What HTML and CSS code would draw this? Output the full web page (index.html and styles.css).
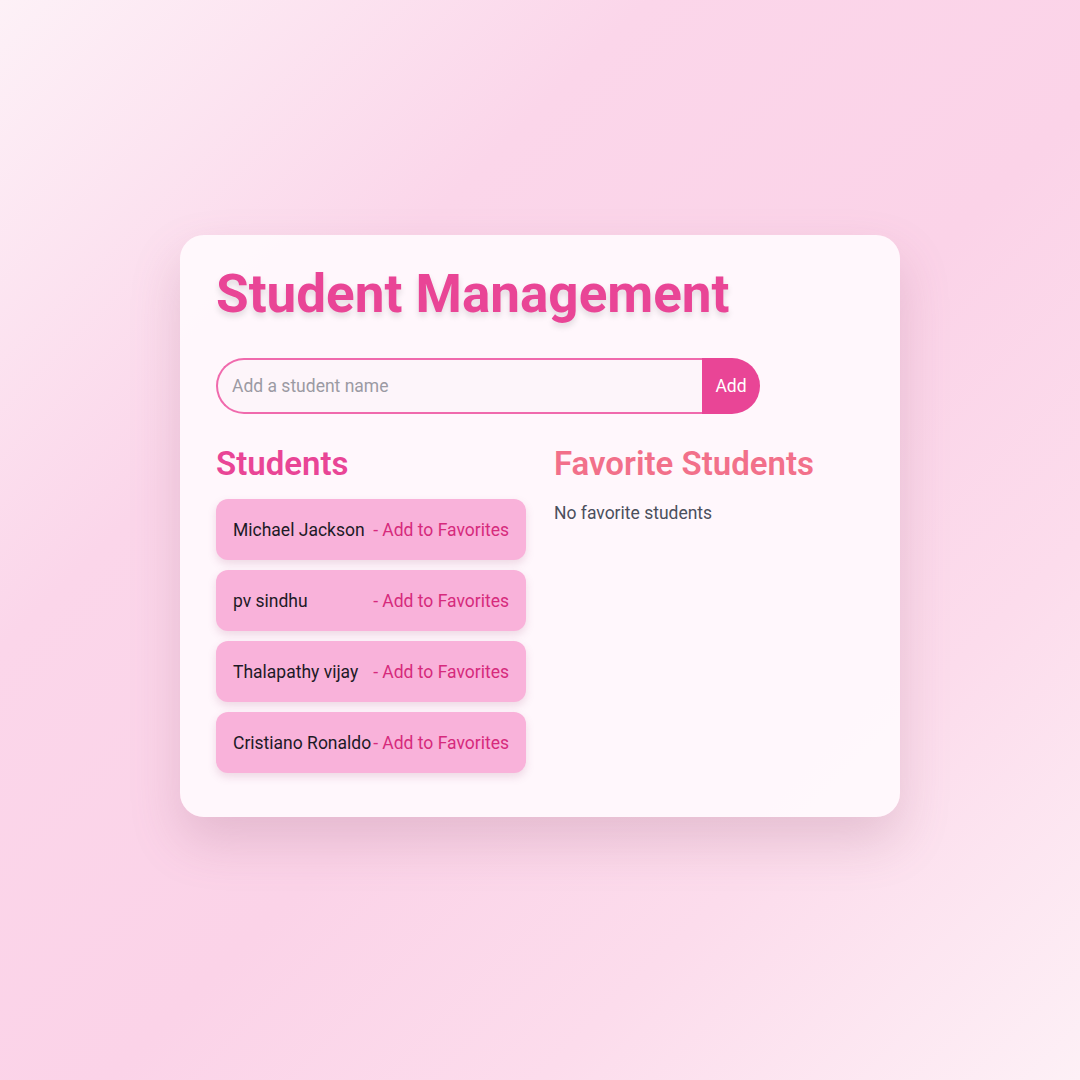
FILE: index.html
```html
<!DOCTYPE html>
<html lang="en">
<head>
  <meta charset="UTF-8" />
  <meta name="viewport" content="width=device-width, initial-scale=1.0"/>
  <title>Student Management</title>
  <link rel="stylesheet" href="styles.css">
</head>
<body>

  <main class="card">
    <h1 class="title">Student Management</h1>

    <!-- add student form -->
    <form class="add-form">
      <input type="text" class="add-input" placeholder="Add a student name" />
      <button type="submit" class="add-btn">Add</button>
    </form>

    <div class="columns">
      <section class="column">
        <h2 class="col-title">Students</h2>
        <ul class="student-list">
          <li class="student"><span class="name">Michael Jackson</span><a href="#" class="fav-link">- Add to Favorites</a></li>
          <li class="student"><span class="name">pv sindhu</span><a href="#" class="fav-link">- Add to Favorites</a></li>
          <li class="student"><span class="name">Thalapathy vijay</span><a href="#" class="fav-link">- Add to Favorites</a></li>
          <li class="student"><span class="name">Cristiano Ronaldo</span><a href="#" class="fav-link">- Add to Favorites</a></li>
        </ul>
      </section>

      <section class="column">
        <h2 class="col-title fav-title">Favorite Students</h2>
        <p class="empty">No favorite students</p>
      </section>
    </div>
  </main>

</body>
</html>
```

FILE: styles.css
```css
html, body {
  height: 100%;
}
body {
  margin: 0;
  box-sizing: border-box;
  padding-bottom: 28px;
  font-family: Roboto, "Noto Sans", sans-serif;
  background: linear-gradient(135deg, #fdf1f7 0%, #fbd6ea 30%, #fbd3e8 55%, #fcdcec 75%, #fdf0f6 100%);
  display: flex;
  justify-content: center;
  align-items: center;
}

.card {
  width: 720px;
  box-sizing: border-box;
  padding: 28px 36px 44px;
  background: rgba(255, 250, 253, 0.92);
  border-radius: 24px;
  box-shadow: 0 24px 50px rgba(150, 90, 120, 0.22);
}

.title {
  margin: 0 0 31px;
  font-size: 53px;
  font-weight: 700;
  color: #e94596;
  text-shadow: 0 4px 6px rgba(0, 0, 0, 0.12);
  line-height: 1.2;
}

.add-form {
  display: flex;
  width: 544px;
  margin-bottom: 30px;
}
.add-input {
  flex: 1;
  height: 56px;
  box-sizing: border-box;
  padding: 0 14px;
  font-family: inherit;
  font-size: 17.5px;
  color: #333;
  background: #fdf5fa;
  border: 2px solid #f06aad;
  border-right: none;
  border-radius: 28px 0 0 28px;
  outline: none;
}
.add-input::placeholder {
  color: #9b9aa3;
}
.add-btn {
  width: 58px;
  height: 56px;
  border: none;
  border-radius: 0 28px 28px 0;
  background: #e94596;
  color: white;
  font-family: inherit;
  font-size: 17.5px;
  cursor: pointer;
}

.columns {
  display: grid;
  grid-template-columns: 1fr 1fr;
  gap: 28px;
}
.col-title {
  margin: 0 0 16px;
  font-size: 33px;
  font-weight: 600;
  color: #e94596;
  line-height: 1.2;
}
.fav-title {
  color: #f2708a;
}

.student-list {
  list-style: none;
  margin: 0;
  padding: 0;
  display: flex;
  flex-direction: column;
  gap: 10px;
}
.student {
  display: flex;
  justify-content: space-between;
  align-items: center;
  height: 61px;
  padding: 0 17px;
  background: #f9b2da;
  border-radius: 12px;
  box-shadow: 0 4px 8px rgba(160, 80, 120, 0.18);
  font-size: 17.5px;
}
.name {
  color: #1d1a26;
}
.fav-link {
  color: #d62a7c;
  text-decoration: none;
}

.empty {
  margin: 0;
  padding-top: 4px;
  font-size: 17.5px;
  color: #4b4f5c;
}
```
